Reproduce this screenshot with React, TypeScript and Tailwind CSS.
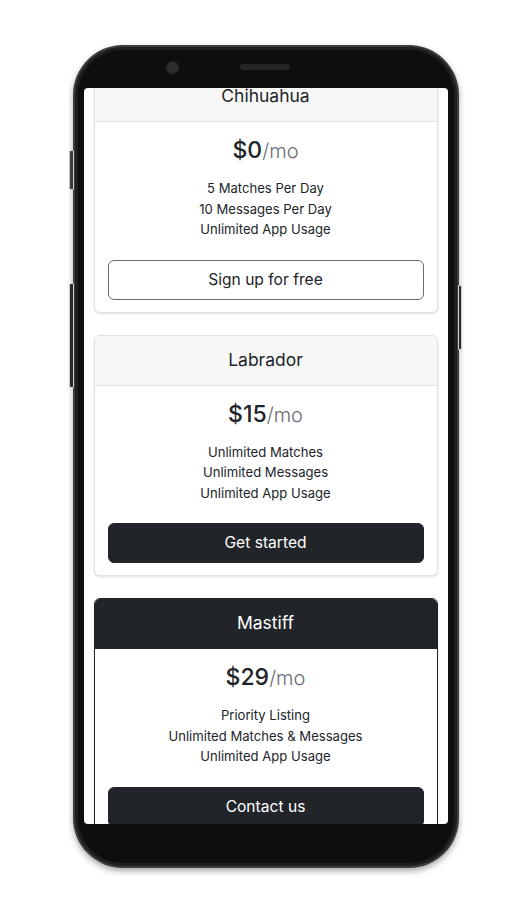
import React from "react";

const plans = [
  {
    name: "Chihuahua",
    price: "$0",
    features: ["5 Matches Per Day", "10 Messages Per Day", "Unlimited App Usage"],
    cta: "Sign up for free",
    outline: true,
    dark: false,
  },
  {
    name: "Labrador",
    price: "$15",
    features: ["Unlimited Matches", "Unlimited Messages", "Unlimited App Usage"],
    cta: "Get started",
    outline: false,
    dark: false,
  },
  {
    name: "Mastiff",
    price: "$29",
    features: ["Priority Listing", "Unlimited Matches & Messages", "Unlimited App Usage"],
    cta: "Contact us",
    outline: false,
    dark: true,
  },
];

function PriceCard({ plan }: { plan: (typeof plans)[number] }) {
  return (
    <div
      className={
        plan.dark
          ? "rounded-[6px] border border-[#212529] bg-white shadow-sm overflow-hidden"
          : "rounded-[6px] border border-[#dfe1e4] bg-white shadow-sm overflow-hidden"
      }
    >
      <div
        className={
          plan.dark
            ? "h-[50px] flex items-center justify-center bg-[#212529] text-white text-[17.5px] border-b border-[#212529]"
            : "h-[50px] flex items-center justify-center bg-[#f7f7f7] text-[#212529] text-[17.5px] border-b border-[#e2e3e5]"
        }
      >
        {plan.name}
      </div>
      <div className="px-[13px] pt-[14px] pb-[12px] flex flex-col items-center text-[#212529]">
        <div className="h-[29px] flex items-baseline text-[23px] font-medium leading-[29px]">
          {plan.price}
          <span className="text-[20px] font-light text-[#686e74]">/mo</span>
        </div>
        <ul className="mt-[13px] flex flex-col items-center text-[13.1px] leading-[20.5px]">
          {plan.features.map((f) => (
            <li key={f}>{f}</li>
          ))}
        </ul>
        <button
          className={
            plan.outline
              ? "mt-[20px] w-full h-[40px] rounded-[6px] border border-[#6a6d70] bg-white text-[#212529] text-[15.6px]"
              : "mt-[20px] w-full h-[40px] rounded-[6px] border border-[#212529] bg-[#212529] text-white text-[15.6px]"
          }
        >
          {plan.cta}
        </button>
      </div>
    </div>
  );
}

export default function App() {
  return (
    <div
      className="min-h-screen bg-white flex justify-center pt-[45px]"
      style={{ fontFamily: "Inter, 'Liberation Sans', sans-serif" }}
    >
      <div className="relative w-[386px] h-[823px]">
        {/* side buttons */}
        <div className="absolute left-[-4px] top-[105px] w-[5px] h-[40px] rounded-l-[2px] bg-[#3a3a3a] border border-[#c9c9c9]" />
        <div className="absolute left-[-4px] top-[238px] w-[5px] h-[105px] rounded-l-[2px] bg-[#2a2a2a] border border-[#cfcfcf]" />
        <div className="absolute right-[-3px] top-[240px] w-[4px] h-[65px] rounded-r-[2px] bg-[#2a2a2a] border border-[#cfcfcf]" />

        <div className="w-full h-full rounded-[50px] bg-[#3c3c3c] p-[2px] shadow-[0_3px_6px_rgba(0,0,0,0.35)]">
          <div className="w-full h-full rounded-[48px] bg-[#1e1e1e] p-[3px]">
            <div className="w-full h-full rounded-[45px] bg-[#0e0e0e] flex flex-col">
              {/* top bezel */}
              <div className="h-[38px] relative flex items-center">
                <div className="ml-[89px] mt-[-4px] w-[11px] h-[11px] rounded-full bg-[#2e2e2e] shadow-[0_0_3px_#444]" />
                <div className="ml-[62px] mt-[-4px] w-[50px] h-[6px] rounded-full bg-[#262626]" />
              </div>
              {/* screen */}
              <div className="mx-[6px] h-[736px] bg-white overflow-hidden rounded-[4px]">
                <div className="px-[10px] mt-[-17px] flex flex-col gap-[22px]">
                  {plans.map((p) => (
                    <PriceCard key={p.name} plan={p} />
                  ))}
                </div>
              </div>
            </div>
          </div>
        </div>
      </div>
    </div>
  );
}
